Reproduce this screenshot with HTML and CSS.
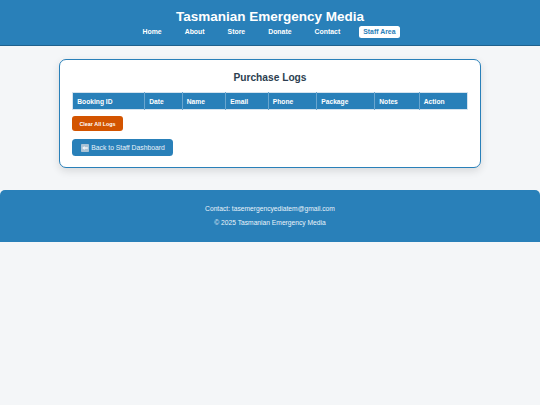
FILE: index.html
```html
<!DOCTYPE html>
<html lang="en">
<head>
<meta charset="utf-8">
<title>Purchase Logs</title>
<link rel="stylesheet" href="styles.css">
</head>
<body>
<header class="site-header">
  <h1 class="site-title">Tasmanian Emergency Media</h1>
  <nav class="nav">
    <a class="nav-link">Home</a>
    <a class="nav-link">About</a>
    <a class="nav-link">Store</a>
    <a class="nav-link">Donate</a>
    <a class="nav-link">Contact</a>
    <a class="nav-link nav-link-active">Staff Area</a>
  </nav>
</header>
<main class="card">
  <h2 class="card-title">Purchase Logs</h2>
  <table class="logs">
    <thead>
      <tr>
        <th class="col-id">Booking ID</th>
        <th class="col-date">Date</th>
        <th class="col-name">Name</th>
        <th class="col-email">Email</th>
        <th class="col-phone">Phone</th>
        <th class="col-package">Package</th>
        <th class="col-notes">Notes</th>
        <th class="col-action">Action</th>
      </tr>
    </thead>
    <tbody></tbody>
  </table>
  <button class="btn-clear">Clear All Logs</button>
  <a class="btn-back">
    <svg class="back-icon" viewBox="0 0 8 8" aria-hidden="true">
      <rect width="8" height="8" rx="0.8" fill="#a9c3d6"/>
      <path d="M1.2 4 L3.6 2 V3.2 H6.8 V4.8 H3.6 V6 Z" fill="#f2f6f9"/>
    </svg>
    Back to Staff Dashboard
  </a>
</main>
<footer class="site-footer">
  <p>Contact: tasemergencyediatem@gmail.com</p>
  <p>© 2025 Tasmanian Emergency Media</p>
</footer>
</body>
</html>
```
FILE: styles.css
```css
* { box-sizing: border-box; }
html, body { margin: 0; padding: 0; }
body {
  background: #f4f6f8;
  font-family: "Liberation Sans", Arial, sans-serif;
  color: #2c3e50;
}
.site-header {
  height: 46px;
  background: #2980b9;
  border-bottom: 1.5px solid #1f618d;
  padding-top: 8px;
  text-align: center;
  color: #fff;
}
.site-title {
  margin: 0;
  font-size: 13.5px;
  line-height: 17px;
  font-weight: 700;
}
.nav {
  display: flex;
  justify-content: center;
  align-items: center;
  gap: 14px;
  margin-top: 1px;
  padding-right: 2px;
}
.nav-link {
  padding: 2px 4.5px;
  font-size: 6.9px;
  line-height: 8px;
  font-weight: 700;
  color: #fff;
  border-radius: 2.5px;
}
.nav-link-active {
  background: #fff;
  color: #2980b9;
}
.card {
  width: 421.5px;
  height: 109px;
  margin: 13px auto 0;
  padding: 11px 12px 0;
  background: #fff;
  border: 1px solid #2980b9;
  border-radius: 7px;
  box-shadow: 0 3px 8px rgba(0, 0, 0, 0.12);
}
.card-title {
  margin: 0 0 8.3px;
  text-align: center;
  font-size: 10.2px;
  line-height: 13px;
  font-weight: 700;
  color: #2c3e50;
}
.logs {
  width: 395px;
  table-layout: fixed;
  border-collapse: collapse;
  margin-bottom: 6.3px;
  border: 0.7px solid #d5e3ee;
}
.logs th {
  height: 16.7px;
  padding: 0 4px;
  background: #2980b9;
  border-right: 0.7px solid #6aa6cf;
  color: #fff;
  font-size: 6.7px;
  font-weight: 700;
  text-align: left;
}
.logs th:last-child { border-right: 0; }
.col-id { width: 72px; }
.col-date { width: 37.5px; }
.col-name { width: 43.5px; }
.col-email { width: 42.5px; }
.col-phone { width: 48.5px; }
.col-package { width: 58px; }
.col-notes { width: 44.5px; }
.col-action { width: 48px; }
.btn-clear {
  display: block;
  width: 50.5px;
  height: 15px;
  margin: 0 0 8px;
  padding: 0;
  border: 0;
  border-radius: 3px;
  background: #d35400;
  color: #fff;
  font-family: inherit;
  font-size: 5.4px;
  font-weight: 700;
}
.btn-back {
  display: flex;
  align-items: center;
  gap: 2px;
  width: 100.7px;
  height: 17px;
  padding-left: 9px;
  border-radius: 3.5px;
  background: #2980b9;
  color: #eaf3f9;
  font-size: 6.8px;
}
.back-icon {
  width: 8px;
  height: 8px;
  flex: none;
}
.site-footer {
  height: 52px;
  margin-top: 22px;
  padding-top: 14.5px;
  background: #2980b9;
  border-radius: 5px 5px 0 0;
  text-align: center;
  color: #eaf3f9;
  font-size: 6.7px;
}
.site-footer p {
  margin: 0 0 6px;
  line-height: 8px;
}
```
